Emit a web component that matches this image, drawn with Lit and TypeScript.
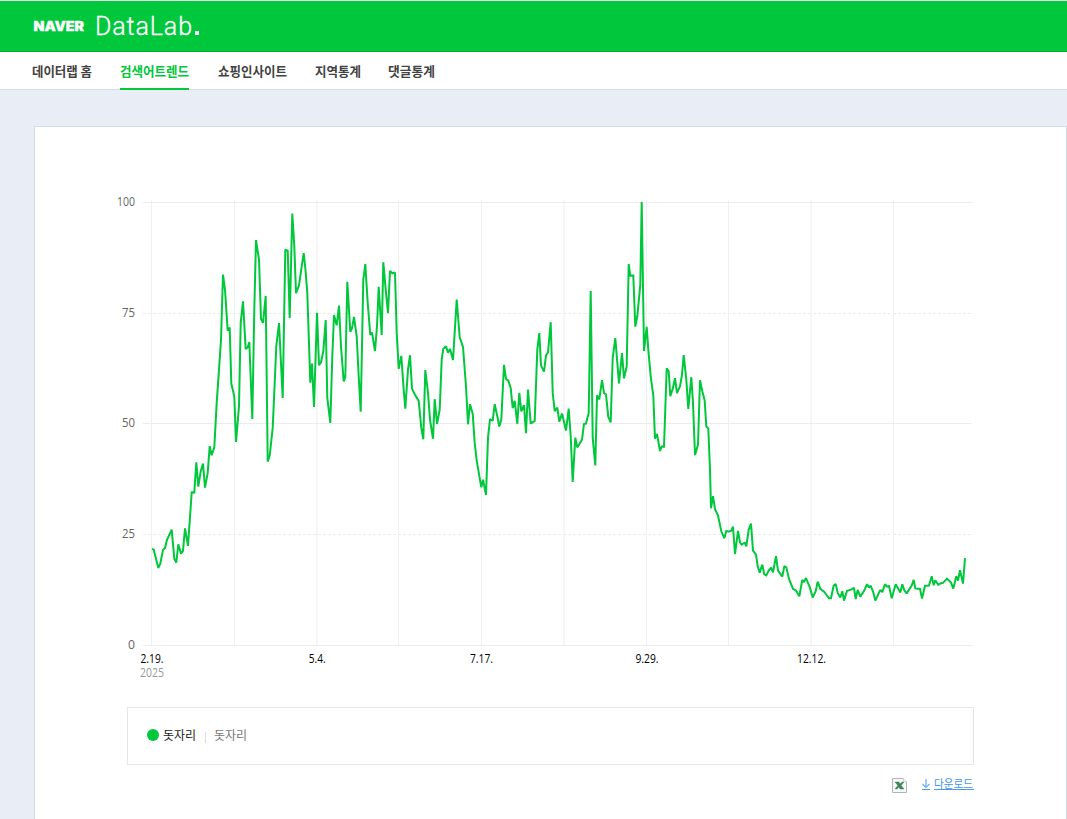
import { LitElement, html, css, svg } from "lit";
import { customElement } from "lit/decorators.js";

const TREND =
  "152,549.3 153.7,550 158.3,568.3 160.3,564 163,550.3 165,548.3 167,540.3 171.7,530 174.3,559 176.3,563 178.3,544.7 181,554 183,551.3 185,528.7 188,546.3 191.7,492.7 194.3,493 196.3,462.7 198.3,487 200.7,471.7 203,464 205,488 207.7,473.3 209.7,446.5 211.7,455.7 214.3,447.7 " +
  "216.7,403.3 219,370 221,340 223,275 225,290 227.7,331 229.7,328 231.3,384 234.3,396.7 236,442.3 239,406.7 240.7,323.3 243,301.7 245.7,349.5 247.7,347.7 249.3,342.5 252.3,419.3 254.3,310 256,240.5 259,260 261,319.3 263,323.2 265.7,296.3 267.7,462 269.7,456 272.7,428.3 274.7,383.3 276.3,346.7 279,323.4 282.7,398.3 285.3,250 287.7,251 289.7,318.5 292.3,214 294.3,246.7 296,293.5 299,285.7 301.7,266.7 303.7,253.5 " +
  "305.3,268.3 307.3,293.3 310.3,383 312,364 314,407.3 317,313.3 319,365.7 321,362.7 323.3,351.7 325.7,320.5 327.3,398.3 330.3,423.3 332.3,356.7 334,315.5 336.7,325.7 339,306 341,346.7 343.7,381.8 345.3,377.7 347.3,282.2 350.3,332.2 352,328.7 354,317.4 356.7,336.7 358.7,376.7 360.7,412.2 363.3,280 365.3,264.5 367.7,303.3 370.3,335.3 372,333 375,351.4 377,326.7 378.7,287.3 381.7,335.4 383.3,262.7 386,293.3 388,313.5 390,271.3 392.3,273.7 395,272.9 396.7,333.3 398.7,369.3 401.3,356.3 403.7,390 405.3,409 408,370 410,355.6 412,389 414.7,394.7 418.7,401.3 421.3,428.3 423.3,439.7 425.3,370.5 428,393.3 430,420 433,439.2 434.7,399.6 437,424.4 439.7,410 441.7,360 443.3,349.3 446,346.6 448,353.1 450,349.3 453,360.5 456.7,300 459.7,337.7 463,347.3 466,386.7 468,424.7 470,404.6 472.7,414 " +
  "474.7,443.3 476.7,461 481.3,487.7 483,480 486,495.4 488,438.3 490,419.6 492.7,421 494.7,404.5 497.3,416.7 499.3,427 501.3,420 504,365.2 506,379.3 508.3,381 510.7,388.3 512.7,408.5 514.7,401.2 517.3,424.2 519.3,393.3 521.3,411.8 524,405.5 526,433.5 528,389.9 530.7,424 534.7,421.3 537.3,350 539.3,333.5 541,366 544,372 546,355.7 548,352.7 550.7,322.6 552.7,393.3 554.7,411.5 557.3,408 559.3,422 562,414 566,431 568.7,409 570.7,436.7 572.7,482.4 575.3,438 577.3,447.8 580,443.3 582,440 584,424.4 586,424 588.7,413.3 590.7,291.5 592.7,438.3 595.3,465.8 597,395.6 599.3,399.8 602,380.6 604,393.3 606,395 608.3,417.3 610.7,422.8 612.7,358.3 615.3,338.6 619,383.8 622,353.6 624,378.8 626.7,366.7 " +
  "628.7,264.5 630.3,276 633.3,275.9 635.3,327 637.3,316.7 640.3,285 641.7,202.3 644,351.4 646.7,327.2 648.3,350 650.7,376.7 653.3,396 655,439 657,434.2 660,451.4 661.7,446.9 664,447 666.7,368.6 668.7,371.7 670.3,396.5 672.7,389.3 675,378.6 677,393.5 680,386.7 682,375 683.7,355.6 686.3,380 688.3,409.4 691.3,377.6 693,403.3 695,455.5 698,445 700,380.6 702.3,391.7 704.7,401 706.3,426.7 708.3,429 710,470 " +
  "711,508.7 713,496.6 715,509.3 718,516 721.3,531.7 724.3,538.6 726.3,531.3 728.7,532 731.3,531 733,527 735,554.4 738,531.3 740,542.7 741.7,545.1 744.7,542.9 746.3,546.7 748.7,530 751,524 753,551 756,555 757.7,566.7 759.7,573 762.3,565 764.3,574.7 766.3,575.8 768.7,571 771,567.9 773,572.7 776,556.6 778,571 782.3,577 784.3,566.6 786.3,567.7 789,579.3 793,589.3 796,591 799.3,596.6 " +
  "802.3,580.3 804,582.5 806,578.4 810,588.3 812.7,598 815.7,591.7 817.7,582 820.3,589.3 824.3,592.3 829,598.7 831,598.7 833.7,586 835.7,584.3 837.7,593.3 840.3,597.8 842.3,591.6 844,601 847,591.3 851,590 854,588.3 855.7,599.4 857.7,590.3 860.3,597 864.3,591 867,584.6 869,587.8 870.7,586.2 873,591.7 875.3,601 880.3,590.2 882.3,592.5 885,584.6 887,587 889,586.4 891.7,598.7 895.7,584.6 900.3,592.8 902.3,584.6 904.3,590.7 906.7,593.8 911.7,586 913.7,580.3 915.3,588.8 920,589.3 922,599 925,586.2 929,585.9 931.7,576.6 933.7,585.7 935.3,580.6 938.3,585.5 940.3,583.8 943,583.3 947,579 951,583 953.3,589 956.3,576.6 958,581 960,570.6 963,584 965,558.5";

const ROWS = [
  { label: "100", y: 202.5, dashed: false, width: 18 },
  { label: "75", y: 313.5, dashed: true, width: 13 },
  { label: "50", y: 423.5, dashed: false, width: 13 },
  { label: "25", y: 534.5, dashed: true, width: 13 },
  { label: "0", y: 645.5, dashed: false, width: 7 },
];

const COLUMNS = [151.5, 234.5, 317, 398.5, 481.5, 564, 646.5, 728.5, 811, 893.5];

const DATES = [
  { label: "2.19.", x: 152, width: 23 },
  { label: "5.4.", x: 317.3, width: 17 },
  { label: "7.17.", x: 481.5, width: 23 },
  { label: "9.29.", x: 647, width: 23 },
  { label: "12.12.", x: 811.5, width: 29 },
];

@customElement("trend-chart")
export class TrendChart extends LitElement {
  static styles = css`
    :host { display: block; width: 864px; height: 490px; }
    .plot { display: block; overflow: hidden; font-family: "Open Sans", "Noto Sans", sans-serif; font-size: 12px; }
    .rule { stroke: #ececec; stroke-width: 1; }
    .column { stroke: #f0f0f0; }
    .dashed { stroke-dasharray: 3 2; }
    .wide { stroke: #f6f6f6; stroke-width: 2; }
    .trend { fill: none; stroke: #00c73c; stroke-width: 2; stroke-linejoin: miter; stroke-miterlimit: 1.5; }
    .scale { fill: #666; text-anchor: end; }
    .date { fill: #000; text-anchor: middle; }
    .year { fill: #999; text-anchor: middle; }
  `;

  render() {
    return html`<svg class="plot" width="864" height="490" viewBox="115 190 864 490">
      ${COLUMNS.map((x) => svg`<line class="rule column ${x % 1 ? "" : "wide"}" x1=${x} x2=${x} y1="200" y2="646"></line>`)}
      ${ROWS.map((r) => svg`
        <line class="rule ${r.dashed ? "dashed" : ""}" x1="143" x2="972" y1=${r.y} y2=${r.y}></line>
        <text class="scale" x="135" y=${r.y + 3.5} textLength=${r.width} lengthAdjust="spacingAndGlyphs">${r.label}</text>`)}
      <polyline class="trend" transform="translate(0 -0.4)" points=${TREND}></polyline>
      ${DATES.map((d) => svg`<text class="date" x=${d.x} y="663" textLength=${d.width} lengthAdjust="spacingAndGlyphs">${d.label}</text>`)}
      <text class="year" x="152" y="677" textLength="24" lengthAdjust="spacingAndGlyphs">2025</text>
    </svg>`;
  }
}

const MENU = [
  { label: "데이터랩 홈", width: 60, gap: 28 },
  { label: "검색어트렌드", width: 69, gap: 29, active: true },
  { label: "쇼핑인사이트", width: 69, gap: 28 },
  { label: "지역통계", width: 46, gap: 27 },
  { label: "댓글통계", width: 47, gap: 0 },
];

@customElement("app-root")
export class AppRoot extends LitElement {
  static styles = css`
    :host {
      display: flex; flex-direction: column; height: 819px; overflow: hidden; box-sizing: border-box;
      background: #e9edf5; font-family: "Noto Sans CJK KR", sans-serif; font-size: 12px;
    }
    .header { height: 52px; flex: none; box-sizing: border-box; background: #00c73c; border-top: 1px solid #e6e9e6; border-bottom: 1px solid #00a832; padding-left: 33px; }
    .brand { display: block; fill: #fff; }
    .naver { font: 900 12.5px Inter, sans-serif; stroke: #fff; stroke-width: 0.3; }
    .lab { font: 300 25px Roboto, sans-serif; stroke: #fff; stroke-width: 0.3; }
    .nav { display: flex; height: 38px; flex: none; box-sizing: border-box; background: #fff; border-bottom: 1px solid #d8dce5; padding-left: 32px; }
    .item { display: block; height: 38px; box-sizing: border-box; border-bottom: 2px solid transparent; flex: none; }
    .item-text { display: block; overflow: visible; font-weight: 700; font-size: 13px; fill: #424242; }
    .active { border-bottom-color: #00c73c; }
    .active .item-text { fill: #00c73c; }
    .card { margin: 36px 0 0 34px; flex: 1; border: 1px solid #d5dae3; border-bottom: 0; background: #fff; }
    .chart { margin: 63px 0 0 80px; }
    .legend { display: flex; align-items: center; box-sizing: border-box; width: 847px; height: 58px; margin: 27px 0 0 92px; padding: 0 0 2px 19px; border: 1px solid #e5e5e5; }
    .dot { width: 12px; height: 12px; border-radius: 50%; background: #00c73c; margin-right: 4px; }
    .legend-name, .legend-word { line-height: 18px; letter-spacing: -0.05px; width: 33px; white-space: nowrap; }
    .legend-name { color: #222; }
    .legend-word { color: #777; }
    .bar { width: 1px; height: 11px; margin: 4px 8px 0 9px; background: #ddd; }
    .tools { display: flex; width: 939px; justify-content: flex-end; align-items: flex-start; padding-top: 13px; }
    .excel { margin-right: 15px; }
    .download { display: flex; color: #4b98f0; }
    .arrow { margin-right: 4px; }
    .download-text { display: block; overflow: visible; fill: #4395f0; font-size: 11.5px; font-weight: 400; }
  `;

  render() {
    return html`
      <header class="header">
        <svg class="brand" width="180" height="50" viewBox="33 1 180 50">
          <text class="naver" x="33.5" y="31" textLength="50.5" lengthAdjust="spacingAndGlyphs">NAVER</text>
          <text class="lab" x="95" y="35" textLength="97" lengthAdjust="spacing">DataLab</text>
          <rect x="195" y="31" width="4" height="4"></rect>
        </svg>
      </header>
      <nav class="nav">
        ${MENU.map((m) => html`<a class="item ${m.active ? "active" : ""}" style="width:${m.width}px;margin-right:${m.gap}px">
          <svg class="item-text" width=${m.width} height="36"><text x="0" y="23.5" textLength=${m.width} lengthAdjust="spacingAndGlyphs">${m.label}</text></svg>
        </a>`)}
      </nav>
      <main class="card">
        <trend-chart class="chart"></trend-chart>
        <div class="legend">
          <span class="dot"></span><span class="legend-name">돗자리</span>
          <span class="bar"></span><span class="legend-word">돗자리</span>
        </div>
        <div class="tools">
          <svg class="excel" width="15" height="15" viewBox="0 0 15 15">
            <path d="M.5.5h11l3 3v11H.5z" fill="#f7f8fa" stroke="#b0b5bc"></path>
            <path d="M11.5.5v3h3" fill="#fff" stroke="#d3d6db"></path>
            <path d="M3 4h4l1.2 2L10 4h2L9.2 7.4 12 11H8L6.800 9 5.200 11H3l2.800-3.500z" fill="#3f8458" stroke="#3f8458" stroke-width="0.400"></path>
          </svg>
          <a class="download">
            <svg class="arrow" width="8" height="14" viewBox="0 0 8 14">
              <path d="M4 1v8.500M.5 6 4 9.500 7.500 6" fill="none" stroke="#7db3f5" stroke-width="1.400"></path>
              <path d="M0 11.500h8" stroke="#4b98f0"></path>
            </svg>
            <svg class="download-text" width="40" height="14" viewBox="0 0 40 14">
              <text x="0" y="10" textLength="39" lengthAdjust="spacingAndGlyphs">다운로드</text>
              <path d="M0 11.500h40" stroke="#4b98f0"></path>
            </svg>
          </a>
        </div>
      </main>
    `;
  }
}
